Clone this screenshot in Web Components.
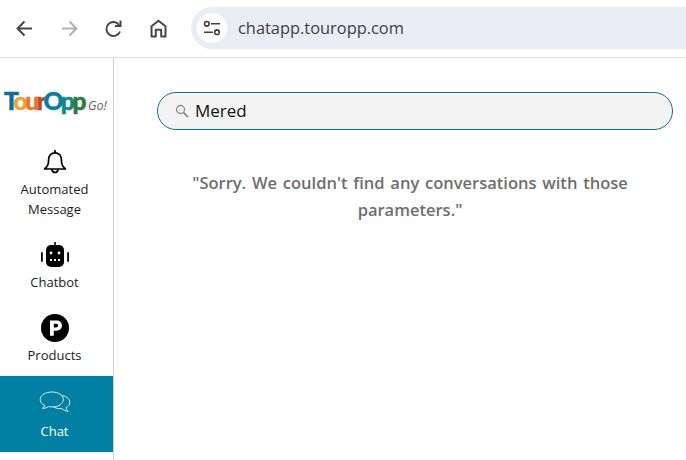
<!DOCTYPE html>
<html>
<head>
<meta charset="utf-8">
<title>TourOpp Go</title>
<style>
    html, body { margin: 0; height: 100%; overflow: hidden; background: #fff; }
    body { display: flex; flex-direction: column; font-family: "Open Sans", "Noto Sans", sans-serif; }
    .app { display: flex; flex: 1; min-height: 0; }
</style>
</head>
<body>
<browser-bar url="chatapp.touropp.com"></browser-bar>
<div class="app">
    <side-nav>
        <brand-logo></brand-logo>
        <nav-item>
            <svg slot="icon" width="26" height="26" viewBox="0 0 26 26" fill="none" stroke="#000" stroke-width="1.7" stroke-linejoin="round" stroke-linecap="round">
                <path d="M13 1.500v2.300M13 3.800c-4 0-6.400 3-6.400 7 0 5.200-1.300 6.800-4 9.200h20.800c-2.700-2.400-4-4-4-9.200 0-4-2.400-7-6.400-7z"/>
                <path d="M10 20.500c.3 2 1.500 3 3 3s2.700-1 3-3"/>
            </svg>
            Automated<br>Message
        </nav-item>
        <nav-item>
            <svg slot="icon" width="30" height="26" viewBox="0 0 30 26">
                <rect x="14.200" y="0" width="1.600" height="4" fill="#000"/>
                <rect x="6" y="3" width="18" height="22" rx="5" fill="#000"/>
                <rect x="1" y="10" width="1.800" height="10" rx=".9" fill="#000"/>
                <rect x="27.200" y="10" width="1.800" height="10" rx=".9" fill="#000"/>
                <circle cx="11" cy="11" r="1.400" fill="#fff"/>
                <circle cx="19" cy="11" r="1.400" fill="#fff"/>
                <rect x="10" y="17" width="2" height="2" fill="#fff"/>
                <rect x="14" y="17" width="2" height="2" fill="#fff"/>
                <rect x="18" y="17" width="2" height="2" fill="#fff"/>
            </svg>
            Chatbot
        </nav-item>
        <nav-item>
            <svg slot="icon" width="28" height="28" viewBox="0 0 28 28">
                <circle cx="14" cy="14" r="14" fill="#000"/>
                <path fill="#fff" fill-rule="evenodd" d="M9 6.500h6.300c3.400 0 5.700 2 5.700 5.100s-2.300 5.200-5.700 5.200h-2.500v5H9zM12.800 9.700v3.900h2.100c1.400 0 2.200-.7 2.200-2s-.8-1.900-2.200-1.900z"/>
            </svg>
            Products
        </nav-item>
        <nav-item active>
            <svg slot="icon" width="32" height="24" viewBox="0 0 32 24" fill="none" stroke="#d8edf3" stroke-width="1" stroke-linejoin="round">
                <path d="M13 1C6.500 1 1.200 4.300 1.200 8.500c0 2.600 1.800 4.700 4.600 6-.4 1.100-1.200 2-2.400 2.800 2.300 0 4.400-.6 6.100-1.700 1.100.2 2.300.4 3.500.4 6.500 0 11.300-3.200 11.300-7.500S19.500 1 13 1z"/>
                <path d="M22.300 4.500c4.800.5 8.500 3.200 8.500 6.800 0 2.300-1.500 4.200-3.800 5.400.3 1.400 1 2.600 2.200 3.700-2.500-.3-4.700-1.300-6.300-2.800-3.300.4-6.600-.4-8.600-2"/>
            </svg>
            Chat
        </nav-item>
    </side-nav>
    <chat-panel message="&quot;Sorry. We couldn't find any conversations with those parameters.&quot;"></chat-panel>
</div>
<script>
class BrowserBar extends HTMLElement {
    constructor() {
        super();
        this.attachShadow({ mode: "open" });
        this.shadowRoot.innerHTML = `
            <style>
                :host {
                    display: flex;
                    align-items: center;
                    height: 56px;
                    flex: none;
                    padding-bottom: 1px;
                    border-bottom: 1px solid #e1e1e1;
                    padding-left: 13px;
                    background: #fff;
                }
                .btn { display: flex; width: 23px; height: 23px; margin-right: 22px; }
                .btn:nth-of-type(2) { margin-right: 21px; }
                .btn:nth-of-type(3) { margin-right: 22px; }
                .btn:nth-of-type(4) { margin-right: 21px; }
                .omni {
                    flex: 1;
                    height: 42px;
                    display: flex;
                    align-items: center;
                    background: #e9edf6;
                    border-radius: 21px 0 0 21px;
                    padding-left: 6px;
                }
                .tune {
                    width: 30px;
                    height: 30px;
                    border-radius: 50%;
                    background: #fff;
                    display: flex;
                    align-items: center;
                    justify-content: center;
                    margin-right: 11px;
                }
                .url {
                    font: 16.400px/22px "Open Sans", "Noto Sans", sans-serif;
                    color: #3c4043;
                }
            </style>
            <span class="btn"><svg width="23" height="23" viewBox="0 0 23 23" fill="none" stroke="#474747" stroke-width="2"><path d="M19 11.500H4.500M11.500 4.500l-7 7 7 7"/></svg></span>
            <span class="btn"><svg width="23" height="23" viewBox="0 0 23 23" fill="none" stroke="#b0b0b0" stroke-width="2"><path d="M4 11.500h14.500M11.500 4.500l7 7-7 7"/></svg></span>
            <span class="btn"><svg width="23" height="23" viewBox="0 0 23 23" fill="none" stroke="#474747" stroke-width="2"><path d="M18 14.500a7 7 0 1 1-.8-6.500"/><path d="M18.500 3.500v5.500H13" fill="none"/></svg></span>
            <span class="btn"><svg width="23" height="23" viewBox="0 0 23 23" fill="none" stroke="#474747" stroke-width="2" stroke-linejoin="round"><path d="M4.500 19.500V9.300l7-5.500 7 5.500v10.200h-4.300v-6.700H8.800v6.700z"/></svg></span>
            <div class="omni">
                <span class="tune"><svg width="18" height="16" viewBox="0 0 18 16" fill="none" stroke="#3c4043" stroke-width="1.600"><circle cx="3.800" cy="3.800" r="2.300"/><path d="M8 3.800h9M1 12.200h9"/><circle cx="14" cy="12.200" r="2.300"/></svg></span>
                <span class="url"></span>
            </div>
        `;
    }

    connectedCallback() {
        this.shadowRoot.querySelector(".url").textContent = this.getAttribute("url") || "";
    }
}

class SideNav extends HTMLElement {
    constructor() {
        super();
        this.attachShadow({ mode: "open" });
        this.shadowRoot.innerHTML = `
            <style>
                :host {
                    display: flex;
                    flex-direction: column;
                    flex: none;
                    width: 113px;
                    border-right: 1px solid #cfcfcf;
                    background: #fff;
                }
            </style>
            <slot></slot>
        `;
    }
}

class BrandLogo extends HTMLElement {
    constructor() {
        super();
        this.attachShadow({ mode: "open" });
        this.shadowRoot.innerHTML = `
            <style>
                :host {
                    display: flex;
                    align-items: baseline;
                    height: 82px;
                    box-sizing: border-box;
                    padding: 26px 0 0 4px;
                    white-space: nowrap;
                }
                .name {
                    font: 900 24.500px/34px Lato, sans-serif;
                    letter-spacing: -2.400px;
                    -webkit-text-stroke: .5px currentColor;
                }
                .name span { -webkit-text-stroke: .5px currentColor; }
                .go {
                    font: italic 12.500px/34px "Open Sans", sans-serif;
                    color: #5f5f5f;
                    margin-left: 4px;
                }
                .t { color: #0b6f97; }
                .o { color: #eaa337; }
                .u { color: #e8772e; }
                .r { color: #c0482f; }
                .b { color: #0a7da0; }
                .p { color: #128a8c; }
                .q { color: #2f7a3c; }
            </style>
            <span class="name"><span class="t">T</span><span class="o">o</span><span class="u">u</span><span class="r">r</span><span class="b">O</span><span class="p">p</span><span class="q">p</span></span>
            <span class="go">Go!</span>
        `;
    }
}

class NavItem extends HTMLElement {
    constructor() {
        super();
        this.attachShadow({ mode: "open" });
        this.shadowRoot.innerHTML = `
            <style>
                :host {
                    display: flex;
                    flex-direction: column;
                    align-items: center;
                    text-align: center;
                    box-sizing: border-box;
                    padding: 8px 4px 14px 0;
                    font: 13px/20px "Open Sans", "Noto Sans", sans-serif;
                    color: #1b1b1b;
                }
                :host([active]) {
                    background: #0280a3;
                    color: #fff;
                    margin-top: -3px;
                    padding: 13px 4px 11px 0;
                }
                .icon { display: flex; height: 28px; align-items: center; margin-bottom: 3px; }
                :host([active]) .icon { margin-bottom: 4px; }
            </style>
            <span class="icon"><slot name="icon"></slot></span>
            <span><slot></slot></span>
        `;
    }
}

class ChatPanel extends HTMLElement {
    constructor() {
        super();
        this.attachShadow({ mode: "open" });
        this.shadowRoot.innerHTML = `
            <style>
                :host {
                    display: flex;
                    flex-direction: column;
                    flex: 1;
                    padding: 34px 13px 0 43px;
                    min-width: 0;
                }
                .search {
                    height: 38px;
                    box-sizing: border-box;
                    border: 1px solid #0a7097;
                    border-radius: 19px;
                    background: #f4f4f4;
                    display: flex;
                    align-items: center;
                    padding-left: 17px;
                    color: #111;
                    font: 17px/24px "Open Sans", "Noto Sans", sans-serif;
                }
                .search svg { margin-right: 6px; }
                .message {
                    width: 460px;
                    margin: 39px 0 0 23px;
                    text-align: center;
                    color: #6e6e6e;
                    word-spacing: 1.500px;
                    font: 600 16.500px/27px "Open Sans", "Noto Sans", sans-serif;
                }
            </style>
            <div class="search">
                <svg width="14" height="14" viewBox="0 0 14 14" fill="none" stroke="#8f8f8f" stroke-width="1.300"><circle cx="5.500" cy="5.500" r="4"/><path d="M8.500 8.500l4.500 4.500" stroke-width="1.800"/></svg>
                <span>Mered</span>
            </div>
            <div class="message"></div>
        `;
    }

    connectedCallback() {
        this.shadowRoot.querySelector(".message").textContent = this.getAttribute("message") || "";
    }
}

customElements.define("browser-bar", BrowserBar);
customElements.define("side-nav", SideNav);
customElements.define("brand-logo", BrandLogo);
customElements.define("nav-item", NavItem);
customElements.define("chat-panel", ChatPanel);
</script>
</body>
</html>
